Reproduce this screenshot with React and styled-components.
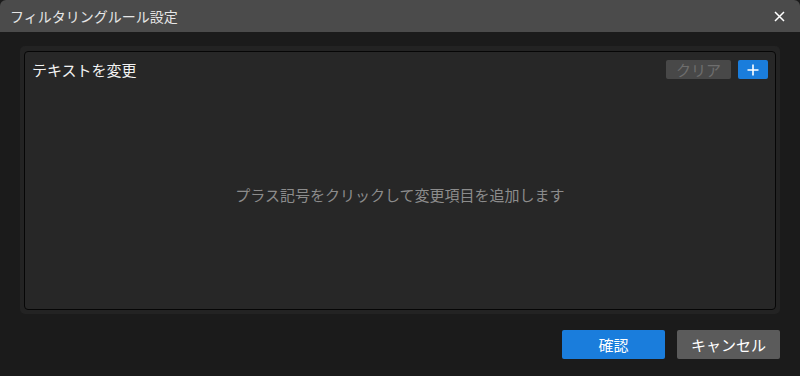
import React from "react"
import styled, { createGlobalStyle } from 'styled-components'


const GlobalStyle = createGlobalStyle`
	html, body {
		margin: 0;
		padding: 0;
		background: #1b1b1b;
	}
	body {
		font-family: "Noto Sans CJK JP", "Noto Sans", sans-serif;
	}
`

const Window = styled.div`
	width: 800px;
	height: 376px;
	display: flex;
	flex-direction: column;
	background: #1b1b1b;
	overflow: hidden;
`

const TitleBar = styled.div`
	height: 32px;
	flex: none;
	display: flex;
	align-items: center;
	justify-content: space-between;
	padding: 0 14px 0 10px;
	background: #4b4b4b;
	border-radius: 6px 6px 0 0;
	color: #e6e6e6;
	font-size: 14px;
`

const CloseBtn = styled.button`
	width: 14px;
	height: 14px;
	padding: 0;
	border: none;
	background: none;
	display: flex;
	align-items: center;
	justify-content: center;
	cursor: pointer;
`

const Body = styled.div`
	padding: 14px 20px 0 20px;
`

const Panel = styled.div`
	height: 268px;
	box-sizing: border-box;
	padding: 5px 4px 4px 4px;
	background: #232323;
	border-radius: 5px;
	display: flex;
`

const RuleBox = styled.div`
	flex: 1;
	display: flex;
	flex-direction: column;
	background: #272727;
	border: 1px solid #060606;
	border-radius: 4px;
`

const RuleHeader = styled.div`
	display: flex;
	align-items: center;
	justify-content: space-between;
	padding: 8px 7px 0 7px;
	height: 19px;
`

const RuleTitle = styled.span`
	color: #f2f2f2;
	font-size: 15px;
`

const HeaderActions = styled.div`
	display: flex;
	gap: 7px;
`

const SmallBtn = styled.button`
	height: 19px;
	width: ${p => p.$w}px;
	padding: 0;
	border: none;
	border-radius: 2px;
	font-family: inherit;
	font-size: 15px;
	line-height: 19px;
	display: flex;
	align-items: center;
	justify-content: center;
	background: ${p => p.$primary ? '#1a7ddc' : '#484848'};
	color: ${p => p.$primary ? '#ffffff' : '#6e6e6e'};
`

const EmptyHint = styled.div`
	flex: 1;
	display: flex;
	align-items: center;
	justify-content: center;
	color: #8c8c8c;
	font-size: 15px;
`

const Footer = styled.div`
	display: flex;
	justify-content: flex-end;
	gap: 12px;
	padding: 16px 20px 0 20px;
`

const DialogBtn = styled.button`
	width: 103px;
	height: 29px;
	border: none;
	border-radius: 2px;
	font-family: inherit;
	font-size: 15px;
	color: #ffffff;
	background: ${p => p.$primary ? '#1a7ddc' : '#5b5b5b'};
	cursor: pointer;
`


const App = () => (
	<>
		<GlobalStyle />
		<Window>
			<TitleBar>
				<span>フィルタリングルール設定</span>
				<CloseBtn aria-label="close">
					<svg width="11" height="11" viewBox="0 0 11 11">
						<path d="M1 1L10 10M10 1L1 10" stroke="#ffffff" strokeWidth="1.5" />
					</svg>
				</CloseBtn>
			</TitleBar>

			<Body>
				<Panel>
					<RuleBox>
						<RuleHeader>
							<RuleTitle>テキストを変更</RuleTitle>
							<HeaderActions>
								<SmallBtn $w={65}>クリア</SmallBtn>
								<SmallBtn $w={30} $primary>
									<svg width="12" height="12" viewBox="0 0 12 12">
										<path d="M6 0.5V11.5M0.5 6H11.5" stroke="#ffffff" strokeWidth="1.6" />
									</svg>
								</SmallBtn>
							</HeaderActions>
						</RuleHeader>
						<EmptyHint>プラス記号をクリックして変更項目を追加します</EmptyHint>
					</RuleBox>
				</Panel>
			</Body>

			<Footer>
				<DialogBtn $primary>確認</DialogBtn>
				<DialogBtn>キャンセル</DialogBtn>
			</Footer>
		</Window>
	</>
)


export default App
